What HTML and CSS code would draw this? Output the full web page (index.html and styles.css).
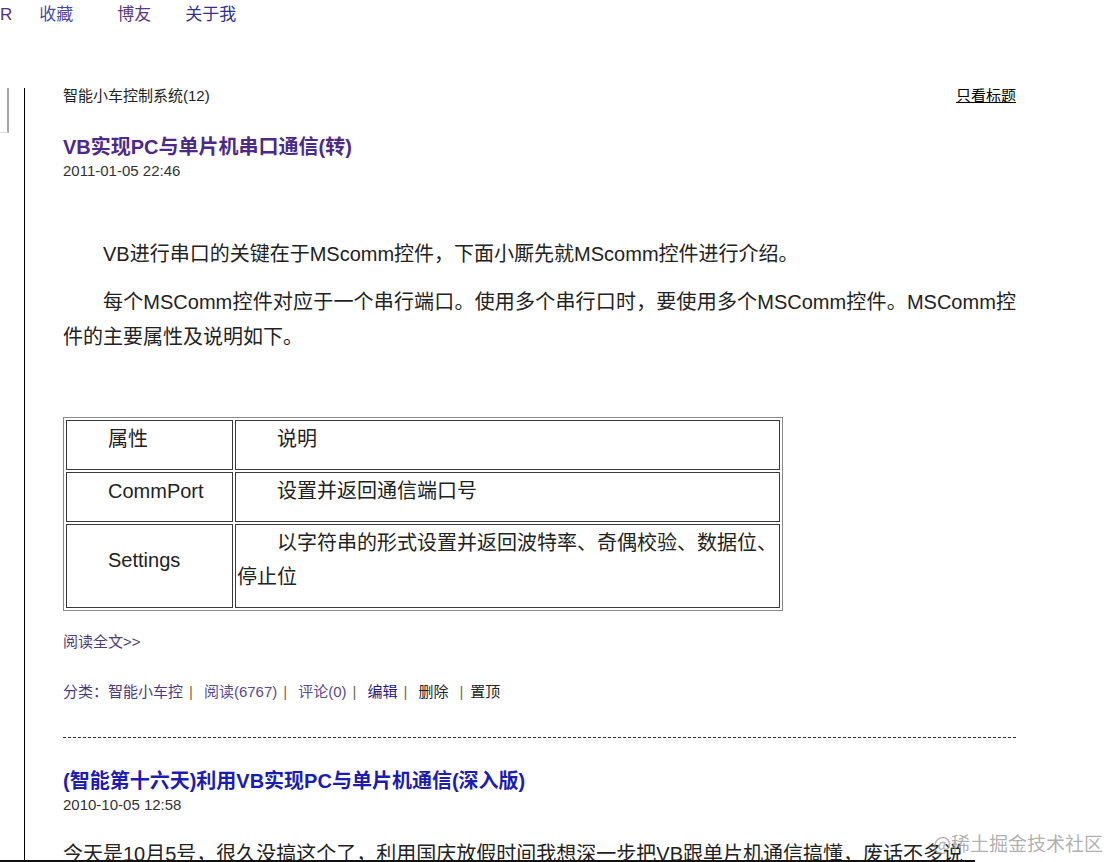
FILE: index.html
```html
<!DOCTYPE html>
<html lang="zh-CN">
<head>
<meta charset="utf-8">
<title>智能小车控制系统</title>
<link rel="stylesheet" href="styles.css">
</head>
<body>
<nav class="topnav">
  <a class="nav-link nav-r">R</a>
  <a class="nav-link nav-fav">收藏</a>
  <a class="nav-link nav-friend">博友</a>
  <a class="nav-link nav-about">关于我</a>
</nav>
<div class="layout">
  <aside class="side"><div class="side-box"></div></aside>
  <main class="main">
    <div class="list-head">
      <span class="cat-name">智能小车控制系统(12)</span>
      <a class="only-title">只看标题</a>
    </div>

    <article class="post">
      <h2 class="post-title visited">VB实现PC与单片机串口通信(转)</h2>
      <div class="post-date">2011-01-05 22:46</div>
      <div class="post-body">
        <p class="para first">VB进行串口的关键在于MScomm控件，下面小厮先就MScomm控件进行介绍。</p>
        <p class="para">每个MSComm控件对应于一个串行端口。使用多个串行口时，要使用多个MSComm控件。MSComm控件的主要属性及说明如下。</p>
        <table class="props">
          <tr>
            <td class="c1"><p class="cell-p">属性</p></td>
            <td class="c2"><p class="cell-p">说明</p></td>
          </tr>
          <tr>
            <td class="c1"><p class="cell-p">CommPort</p></td>
            <td class="c2"><p class="cell-p">设置并返回通信端口号</p></td>
          </tr>
          <tr>
            <td class="c1"><p class="cell-p">Settings</p></td>
            <td class="c2"><p class="cell-p">以字符串的形式设置并返回波特率、奇偶校验、数据位、停止位</p></td>
          </tr>
        </table>
      </div>
      <a class="read-more">阅读全文&gt;&gt;</a>
      <div class="meta">
        <span class="m-cat">分类：智能小车控</span><span class="sep">|</span>
        <span class="m-read">阅读(6767)</span><span class="sep">|</span>
        <span class="m-read">评论(0)</span><span class="sep">|</span>
        <span class="m-edit">编辑</span><span class="sep">|</span>
        <span class="m-plain">删除</span><span class="sep sep-wide">|</span><span class="m-plain">置顶</span>
      </div>
    </article>

    <hr class="divider">

    <article class="post">
      <h2 class="post-title fresh">(智能第十六天)利用VB实现PC与单片机通信(深入版)</h2>
      <div class="post-date">2010-10-05 12:58</div>
      <p class="para plain">今天是10月5号，很久没搞这个了，利用国庆放假时间我想深一步把VB跟单片机通信搞懂，废话不多说</p>
    </article>
  </main>
</div>
<div class="frame-bottom"></div>
<div class="watermark">@稀土掘金技术社区</div>
</body>
</html>
```
FILE: styles.css
```css
html, body {
  margin: 0;
  padding: 0;
  height: 862px;
  overflow: hidden;
  background: #fff;
}
body {
  font-family: "Liberation Sans", "Noto Sans CJK SC", sans-serif;
  color: #222;
  position: relative;
}
a { text-decoration: none; cursor: pointer; }

.topnav {
  display: flex;
  height: 30px;
  line-height: 30px;
  font-size: 17px;
}
.nav-r { color: #552e82; }
.nav-fav { color: #4a4aa0; margin-left: 27px; }
.nav-friend { color: #5b3b80; margin-left: 44px; }
.nav-about { color: #33338a; margin-left: 34px; }

.layout {
  display: flex;
  margin-top: 58px;
  height: 774px;
}
.side {
  width: 24px;
  flex: none;
}
.side-box {
  width: 7px;
  height: 44px;
  border-right: 2px solid #a6a6a6;
  border-bottom: 1px solid #dcdcdc;
}
.main {
  flex: 1;
  border-left: 1px solid #000;
  padding: 0 93px 0 38px;
}

.list-head {
  display: flex;
  justify-content: space-between;
  font-size: 15px;
  line-height: 16px;
}
.cat-name { color: #222; }
.only-title {
  color: #000;
  text-decoration: underline;
}

.post-title {
  margin: 31px 0 0;
  font-size: 20px;
  line-height: 24px;
  font-weight: bold;
}
.post-title.visited { color: #4b2a88; }
.post-title.fresh { color: #1c1cb0; }
.post-date {
  font-size: 15px;
  line-height: 24px;
  color: #333;
}

.para {
  margin: 13px 0 0;
  font-size: 20px;
  line-height: 35px;
  text-indent: 40px;
  text-align: justify;
  color: #222;
}
.para.first { margin-top: 54px; }
.para.plain { text-indent: 0; margin-top: 20px; }

.props {
  margin-top: 62px;
  width: 720px;
  border: 1px solid #8a8a8a;
  border-spacing: 2px;
  font-size: 20px;
  color: #222;
}
.props td {
  border: 1px solid #3a3a3a;
  padding: 1px;
  vertical-align: middle;
}
.props .c1 { width: 163px; }
.cell-p {
  margin: 0 0 12px;
  line-height: 34px;
  text-indent: 40px;
}

.read-more {
  display: block;
  margin-top: 21px;
  font-size: 15px;
  line-height: 20px;
  color: #4b3a78;
}

.meta {
  margin-top: 30px;
  font-size: 15px;
  line-height: 20px;
  display: flex;
}
.m-cat { color: #4a3a7a; }
.m-read { color: #5a4a8a; }
.m-edit { color: #1a1a80; }
.m-plain { color: #222; }
.sep {
  color: #7a6a4a;
  margin: 0 11px 0 6px;
}
.sep-wide { margin: 0 7px 0 11px; }

.divider {
  margin: 35px 0 0;
  border: 0;
  border-top: 1px dashed #333;
  height: 0;
}

.frame-bottom {
  position: absolute;
  left: 0;
  top: 860px;
  width: 975px;
  height: 2px;
  background: #111;
}
.watermark {
  position: absolute;
  right: 6px;
  top: 830px;
  font-size: 19px;
  line-height: 26px;
  color: rgba(150, 150, 150, 0.75);
  font-family: "Noto Sans CJK SC", sans-serif;
}
```
